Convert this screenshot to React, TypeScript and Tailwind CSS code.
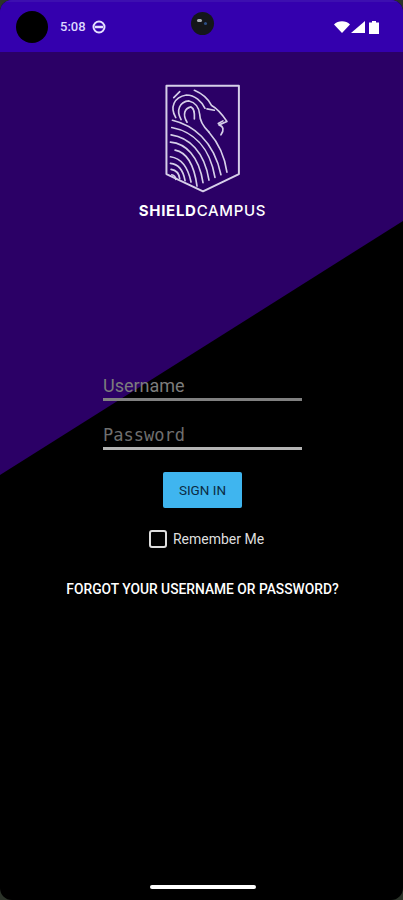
import React from 'react';

function Logo() {
  return (
    <svg width="80" height="111" viewBox="98 24 240 334" fill="none" stroke="#d6cfe9" strokeWidth="5" strokeLinecap="round" strokeLinejoin="round">
      {/* shield */}
      <path d="M108 32H326V298L218 350L108 298Z" strokeWidth="6" />
      {/* head */}
      <path d="M192 46C216 56 234 72 244 92C262 102 278 122 290 140L266 150C280 154 282 166 272 180" />
      <path d="M230 102L252 106M264 146L278 138" />
      {/* mane */}
      <path d="M130 68L148 50" />
      <path d="M136 128C118 98 130 66 168 60C194 60 214 80 224 100" />
      <path d="M152 134C136 106 148 80 176 78C194 82 206 98 208 118C208 138 220 156 236 172" />
      <path d="M170 142C156 120 162 100 182 96C194 102 192 118 192 132" />
      {/* fingerprint sweep */}
      <path d="M236 172C266 206 284 250 290 292" />
      <path d="M126 136C186 150 250 196 272 300" />
      <path d="M124 158C186 170 238 214 254 308" />
      <path d="M122 180C176 188 222 230 236 316" />
      <path d="M120 202C166 206 206 244 218 324" />
      <path d="M134 226C166 232 190 262 200 334" />
      <path d="M120 246C150 250 172 274 182 322" />
      <path d="M120 266C142 268 158 284 164 318" />
      <path d="M122 284C136 286 146 296 148 312" />
      <path d="M124 300C132 302 136 308 136 314" />
    </svg>
  );
}

export default function App() {
  return (
    <div className="relative h-[900px] w-[403px] overflow-hidden bg-[#2b3329] font-['Roboto',sans-serif]">
      <div className="relative flex h-full flex-col overflow-hidden rounded-[12px] bg-black">
        {/* purple diagonal */}
        <div className="absolute inset-0 bg-[#2b0066] [clip-path:polygon(0_0,100%_0,100%_221px,0_475px)]"></div>

        {/* status bar */}
        <div className="relative flex h-[52px] shrink-0 items-center border-t-2 border-[#3d0fb0] bg-[#3400ae] pl-4 pr-6">
          <div className="h-8 w-8 rounded-full bg-black"></div>
          <span className="ml-3 text-[13px] font-medium text-[#dcd6ff]">5:08</span>
          <svg className="ml-[6px]" width="14" height="14" viewBox="0 0 14 14">
            <circle cx="7" cy="7" r="5.5" fill="none" stroke="#e6e0ff" strokeWidth="2" />
            <path d="M3 7H11" stroke="#e6e0ff" strokeWidth="2.5" />
          </svg>
          <div className="ml-auto flex items-center gap-[1px]">
            <svg width="16" height="12" viewBox="0 0 16 12"><path d="M0 3.5C4 -0.8 12 -0.8 16 3.5L8 12Z" fill="#fff" /></svg>
            <svg width="14" height="12" viewBox="0 0 14 12"><path d="M14 0V12H0Z" fill="#fff" /></svg>
            <svg className="ml-[3px]" width="10" height="13" viewBox="0 0 10 13"><path d="M3 0H7V1.5H10V13H0V1.5H3Z" fill="#fff" /></svg>
          </div>
          {/* camera */}
          <div className="absolute left-[191px] top-[10px] h-[23px] w-[23px] rounded-full bg-[#14161a]">
            <div className="absolute left-[6px] top-[7px] h-[3px] w-[5px] rounded-full bg-[#a9adb5]"></div>
            <div className="absolute left-[13px] top-[10px] h-[3px] w-[3px] rounded-full bg-[#2c4f86]"></div>
          </div>
        </div>

        {/* content */}
        <div className="relative flex flex-1 flex-col items-center pl-[2px]">
          <div className="mt-[31px]"><Logo /></div>
          <div className="mt-[8px] font-['Inter',sans-serif] text-[15px] leading-[18px] tracking-[0.7px] text-white">
            <span className="font-bold">SHIELD</span><span className="font-medium">CAMPUS</span>
          </div>

          <input
            placeholder="Username"
            className="mt-[151px] h-[30px] w-[199px] border-b-[3px] border-[#808080] bg-transparent pt-[1px] text-[18px] leading-[24px] outline-none placeholder:text-[#7c7c7c]"
          />
          <input
            placeholder="Password"
            className="mt-[18px] h-[31px] w-[199px] border-b-[3px] border-[#b4b4b4] bg-transparent pt-[4px] font-['DejaVu_Sans_Mono',monospace] text-[17px] outline-none placeholder:text-[#6f6f6f]"
          />
          <button className="mt-[22px] h-[36px] w-[79px] rounded-[2px] bg-[#3fb5ef] text-[13.5px] text-[#0b2c44]">SIGN IN</button>

          <label className="mt-[22px] ml-[8px] flex items-center gap-[6px]">
            <span className="h-[18px] w-[18px] rounded-[3px] border-2 border-[#dedede]"></span>
            <span className="text-[14px] leading-[18px] text-[#dedede]">Remember Me</span>
          </label>

          <div className="mt-[32px] text-[13.8px] font-medium leading-[18px] text-white">FORGOT YOUR USERNAME OR PASSWORD?</div>

          <div className="mt-auto mb-[11px] h-[4px] w-[106px] rounded-full bg-white"></div>
        </div>
      </div>
    </div>
  );
}
